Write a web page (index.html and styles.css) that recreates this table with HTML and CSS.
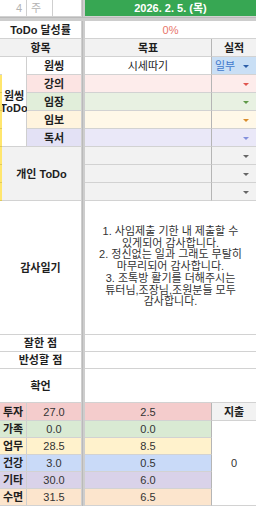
FILE: index.html
```html
<!DOCTYPE html>
<html lang="ko">
<head>
<meta charset="utf-8">
<title>ToDo</title>
<link rel="stylesheet" href="styles.css">
</head>
<body>
<div class="sheet">
  <div class="vdiv"></div>
  <div class="hdiv"></div>

  <div class="cell span2 week-num">4</div>
  <div class="cell week-unit">주</div>
  <div class="cell"></div>
  <div class="cell span2 date">2026. 2. 5. (목)</div>

  <div class="cell span4 lbl">ToDo 달성률</div>
  <div class="cell span2 rate">0%</div>

  <div class="cell span4 lbl gray">항목</div>
  <div class="cell lbl gray goal">목표</div>
  <div class="cell lbl gray last">실적</div>

  <div class="cell strip"></div>
  <div class="cell lbl rowspan5 onething">원씽<br>ToDo</div>
  <div class="cell span2 lbl">원씽</div>
  <div class="cell goal">시세따기</div>
  <div class="cell last result dd dd-blue">일부</div>

  <div class="cell strip yellow"></div>
  <div class="cell span2 lbl pink">강의</div>
  <div class="cell goal pink-l"></div>
  <div class="cell last pink-l dd dd-red"></div>

  <div class="cell strip yellow"></div>
  <div class="cell span2 lbl green">임장</div>
  <div class="cell goal green-l"></div>
  <div class="cell last green-l dd dd-green"></div>

  <div class="cell strip yellow"></div>
  <div class="cell span2 lbl cream">임보</div>
  <div class="cell goal cream-l"></div>
  <div class="cell last cream-l dd dd-orange"></div>

  <div class="cell strip yellow"></div>
  <div class="cell span2 lbl lav">독서</div>
  <div class="cell goal lav-l"></div>
  <div class="cell last lav-l dd dd-violet"></div>

  <div class="cell strip yellow"></div>
  <div class="cell span3 rowspan3 lbl gray">개인 ToDo</div>
  <div class="cell goal gray"></div>
  <div class="cell last gray dd dd-gray"></div>

  <div class="cell strip yellow"></div>
  <div class="cell goal gray"></div>
  <div class="cell last gray dd dd-gray"></div>

  <div class="cell strip yellow"></div>
  <div class="cell goal gray"></div>
  <div class="cell last gray dd dd-gray"></div>

  <div class="cell span4 lbl">감사일기</div>
  <div class="cell span2 last diary">1. 사임제출 기한 내 제출할 수<br>있게되어 감사합니다.<br>2. 정신없는 일과 그래도 무탈히<br>마무리되어 감사합니다.<br>3. 조톡방 활기를 더해주시는<br>튜터님,조장님,조원분들 모두<br>감사합니다.</div>

  <div class="cell span4 lbl">잘한 점</div>
  <div class="cell span2 last"></div>

  <div class="cell span4 lbl">반성할 점</div>
  <div class="cell span2 last"></div>

  <div class="cell span4 lbl">확언</div>
  <div class="cell span2 last"></div>

  <div class="cell span2 lbl t-pink">투자</div>
  <div class="cell span2 num t-pink">27.0</div>
  <div class="cell goal num t-pink">2.5</div>
  <div class="cell lbl gray last">지출</div>

  <div class="cell span2 lbl t-green">가족</div>
  <div class="cell span2 num t-green">0.0</div>
  <div class="cell goal num t-green">0.0</div>
  <div class="cell rowspan5 last num">0</div>

  <div class="cell span2 lbl t-yellow">업무</div>
  <div class="cell span2 num t-yellow">28.5</div>
  <div class="cell goal num t-yellow">8.5</div>

  <div class="cell span2 lbl t-blue">건강</div>
  <div class="cell span2 num t-blue">3.0</div>
  <div class="cell goal num t-blue">0.5</div>

  <div class="cell span2 lbl t-purple">기타</div>
  <div class="cell span2 num t-purple">30.0</div>
  <div class="cell goal num t-purple">6.0</div>

  <div class="cell span2 lbl t-orange">수면</div>
  <div class="cell span2 num t-orange">31.5</div>
  <div class="cell goal num t-orange">6.5</div>
</div>
</body>
</html>
```
FILE: styles.css
```css
* { box-sizing: border-box; }
html, body {
  margin: 0;
  padding: 0;
  background: #ffffff;
}
body {
  font-family: "Liberation Sans", "Noto Sans CJK KR", sans-serif;
  font-size: 11px;
  color: #222222;
  width: 256px;
  height: 506px;
  overflow: hidden;
}
.sheet {
  display: grid;
  grid-template-columns: 2px 25px 26px 29px 3px 127px 44px;
  grid-template-rows: 17px 4px repeat(10, 18px) 134px 17px 17px 34px 18px repeat(5, 17px);
}
.vdiv {
  grid-column: 5;
  grid-row: 1 / -1;
  background: #cdcdcd;
  border-left: 1px solid #bababa;
}
.hdiv {
  grid-column: 1 / -1;
  grid-row: 2;
  background: #cdcdcd;
  border-top: 1px solid #bababa;
}
.cell {
  display: flex;
  align-items: center;
  justify-content: center;
  text-align: center;
  border-right: 1px solid #cfcfcf;
  border-bottom: 1px solid #d2d2d2;
  white-space: nowrap;
  line-height: 12px;
  position: relative;
}
.span2 { grid-column: span 2; }
.span3 { grid-column: span 3; }
.span4 { grid-column: span 4; }
.rowspan3 { grid-row: span 3; }
.rowspan5 { grid-row: span 5; }
.last { border-right: none; }
.goal { border-right-color: #b5b5b5; }

.week-num {
  justify-content: flex-end;
  padding-right: 4px;
  color: #b3b3b3;
}
.week-unit {
  justify-content: flex-start;
  padding-left: 4px;
  color: #b3b3b3;
}
.date {
  background: #37a753;
  color: #ffffff;
  font-weight: bold;
  border-right: none;
}
.rate {
  color: #e8766b;
  border-right: none;
}
.lbl { font-weight: bold; color: #1e1e1e; }
.gray { background: #f2f2f2; }
.onething {
  white-space: normal;
  flex-direction: column;
}
.strip { border-right: none; }
.yellow { background: #ffe66e; border-bottom-color: #e0c95a; }

.pink { background: #fce4e3; }
.pink-l { background: #fdeceb; }
.green { background: #e1eeda; }
.green-l { background: #e8f1e2; }
.cream { background: #fff4de; }
.cream-l { background: #fff8e8; }
.lav { background: #e3e1f5; }
.lav-l { background: #eae8f8; }

.result {
  background: #c9dff5;
  color: #3f78cc;
  justify-content: flex-start;
  padding-left: 3px;
}

.dd::after {
  content: "";
  position: absolute;
  right: 7px;
  top: 50%;
  margin-top: -1px;
  border-left: 3px solid transparent;
  border-right: 3px solid transparent;
  border-top: 3px solid var(--tri);
}
.dd-blue { --tri: #2d5fa8; }
.dd-red { --tri: #e0554f; }
.dd-green { --tri: #5f9a48; }
.dd-orange { --tri: #d98c2c; }
.dd-violet { --tri: #8390dc; }
.dd-gray { --tri: #666666; }

.diary {
  font-size: 11px;
  line-height: 11.7px;
  color: #333333;
  padding-bottom: 1px;
}
.num { color: #333333; }

.t-pink { background: #f4cccc; }
.t-green { background: #d9ead3; }
.t-yellow { background: #fff2cc; }
.t-blue { background: #c9daf8; }
.t-purple { background: #d9d2e9; }
.t-orange { background: #fce5cd; }
```
